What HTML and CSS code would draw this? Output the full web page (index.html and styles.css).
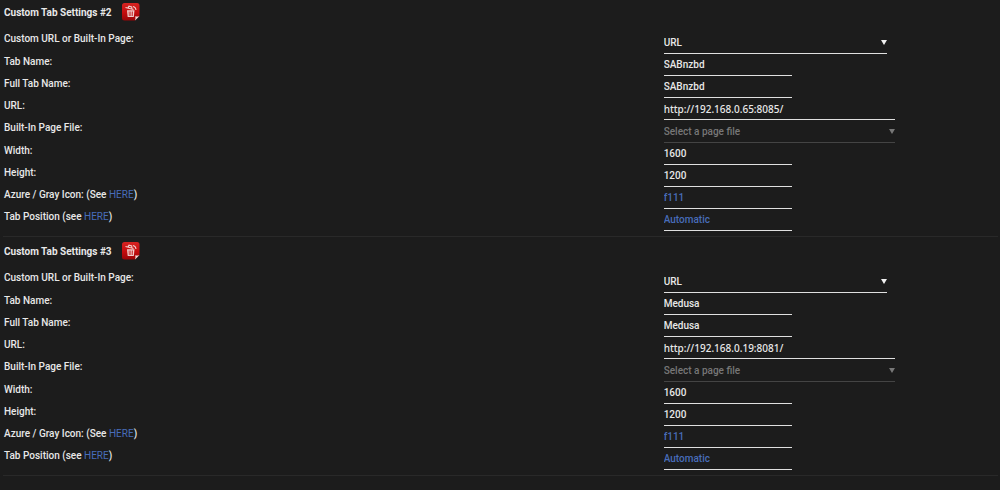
FILE: index.html
```html
<!DOCTYPE html>
<html lang="en">
<head>
<meta charset="utf-8">
<title>Custom Tab Settings</title>
<link rel="stylesheet" href="styles.css">
</head>
<body>
<svg class="defs" aria-hidden="true">
  <defs>
    <linearGradient id="red" x1="0" y1="0" x2="0" y2="1">
      <stop offset="0" stop-color="#d52422"/>
      <stop offset=".55" stop-color="#c40c0e"/>
      <stop offset="1" stop-color="#970508"/>
    </linearGradient>
    <symbol id="trash" viewBox="0 0 18 18">
      <path fill="url(#red)" d="M2.500 0h12.500a2.500 2.500 0 0 1 2.500 2.500V13L13 17.500H2.500A2.500 2.500 0 0 1 0 15V2.500A2.500 2.500 0 0 1 2.500 0z"/>
      <path fill="#f3dddb" d="M17.500 13 13 17.500q.9-2.500.2-4.200 2.200.6 4.300-.3z"/>
      <path fill="none" stroke="#f0cfcd" stroke-width="1.100" d="M3.500 4.500 11.500 6.500M6 4.600l1-1.400 2.700.8.200 1.700M11 3.500q2.700.5 3 3.500"/>
      <path fill="#f0cfcd" d="M5 7.200h7.500l-.7 6.800H5.700z"/>
      <path stroke="#c01517" stroke-width=".8" d="M7.100 8.500l.2 4.500M8.800 8.500v4.500M10.500 8.500l-.2 4.500"/>
    </symbol>
  </defs>
</svg>
<main class="settings">
  <form class="section">
    <header class="heading">
      <h2 class="title">Custom Tab Settings #2</h2>
      <button class="delete" type="button" aria-label="Delete custom tab 2"><svg class="icon"><use href="#trash"/></svg></button>
    </header>
    <div class="row row-select"><label class="label" for="type2">Custom URL or Built-In Page:</label><span class="select"><select class="field medium" id="type2"><option>URL</option></select></span></div>
    <div class="row"><label class="label" for="tab2">Tab Name:</label><input class="field" id="tab2" value="SABnzbd"></div>
    <div class="row"><label class="label" for="full2">Full Tab Name:</label><input class="field" id="full2" value="SABnzbd"></div>
    <div class="row"><label class="label" for="url2">URL:</label><input class="field wide address" id="url2" value="http://192.168.0.65:8085/"></div>
    <div class="row row-select"><label class="label" for="page2">Built-In Page File:</label><span class="select off"><select class="field wide" id="page2" disabled><option>Select a page file</option></select></span></div>
    <div class="row"><label class="label" for="width2">Width:</label><input class="field" id="width2" value="1600"></div>
    <div class="row"><label class="label" for="height2">Height:</label><input class="field" id="height2" value="1200"></div>
    <div class="row"><label class="label" for="icon2">Azure / Gray Icon: (See <a class="link" href="#">HERE</a>)</label><input class="field" id="icon2" placeholder="f111"></div>
    <div class="row"><label class="label" for="pos2">Tab Position (see <a class="link" href="#">HERE</a>)</label><input class="field" id="pos2" placeholder="Automatic"></div>
  </form>
  <form class="section">
    <header class="heading">
      <h2 class="title">Custom Tab Settings #3</h2>
      <button class="delete" type="button" aria-label="Delete custom tab 3"><svg class="icon"><use href="#trash"/></svg></button>
    </header>
    <div class="row row-select"><label class="label" for="type3">Custom URL or Built-In Page:</label><span class="select"><select class="field medium" id="type3"><option>URL</option></select></span></div>
    <div class="row"><label class="label" for="tab3">Tab Name:</label><input class="field" id="tab3" value="Medusa"></div>
    <div class="row"><label class="label" for="full3">Full Tab Name:</label><input class="field" id="full3" value="Medusa"></div>
    <div class="row"><label class="label" for="url3">URL:</label><input class="field wide address" id="url3" value="http://192.168.0.19:8081/"></div>
    <div class="row row-select"><label class="label" for="page3">Built-In Page File:</label><span class="select off"><select class="field wide" id="page3" disabled><option>Select a page file</option></select></span></div>
    <div class="row"><label class="label" for="width3">Width:</label><input class="field" id="width3" value="1600"></div>
    <div class="row"><label class="label" for="height3">Height:</label><input class="field" id="height3" value="1200"></div>
    <div class="row"><label class="label" for="icon3">Azure / Gray Icon: (See <a class="link" href="#">HERE</a>)</label><input class="field" id="icon3" placeholder="f111"></div>
    <div class="row"><label class="label" for="pos3">Tab Position (see <a class="link" href="#">HERE</a>)</label><input class="field" id="pos3" placeholder="Automatic"></div>
  </form>
</main>
</body>
</html>
```
FILE: styles.css
```css
* { box-sizing: border-box; }
body {
  margin: 0;
  background: #1c1c1c;
  color: #e8e8e8;
  font: 500 10px/15px Roboto, "Noto Sans", sans-serif;
}
.defs { position: absolute; width: 0; height: 0; }
.settings { padding: 0 2px 0 3px; }
.section {
  padding-bottom: 5px;
  margin-bottom: 2px;
  border-bottom: 1px solid #292929;
}
.heading {
  display: flex;
  align-items: center;
  gap: 10px;
  height: 24px;
  margin-bottom: 7px;
  padding-left: 1px;
}
.title { margin: 0; font-size: 10px; line-height: 15px; font-weight: 700; }
.delete { display: flex; padding: 0; border: 0; background: none; cursor: pointer; }
.icon { width: 18px; height: 18px; }
.row {
  display: grid;
  grid-template-columns: 66.4% 1fr;
  align-items: start;
  justify-items: start;
}
.label { padding-left: 1px; }
.link { color: #486dba; font-weight: 400; text-decoration: none; }
.field {
  display: block;
  width: 128px;
  height: 22px;
  margin: 0;
  padding: 0;
  border: 0;
  border-bottom: 1px solid #e0e0e0;
  border-radius: 0;
  outline: 0;
  background: transparent;
  color: #e8e8e8;
  font: inherit;
  appearance: none;
}
.field::placeholder { color: #486dba; opacity: 1; }
.medium { width: 223px; }
.wide { width: 231px; }
.address { font-family: "Noto Sans", sans-serif; }
.row-select .field { height: 23px; opacity: 1; }
.select { position: relative; }
.select::after {
  content: "";
  position: absolute;
  top: 9px;
  right: 0;
  border: 3px solid transparent;
  border-top: 5px solid #f0f0f0;
  border-bottom: 0;
  pointer-events: none;
}
.off .field { color: #777; border-bottom-color: #444; }
.off::after { border-top-color: #777; }
```
